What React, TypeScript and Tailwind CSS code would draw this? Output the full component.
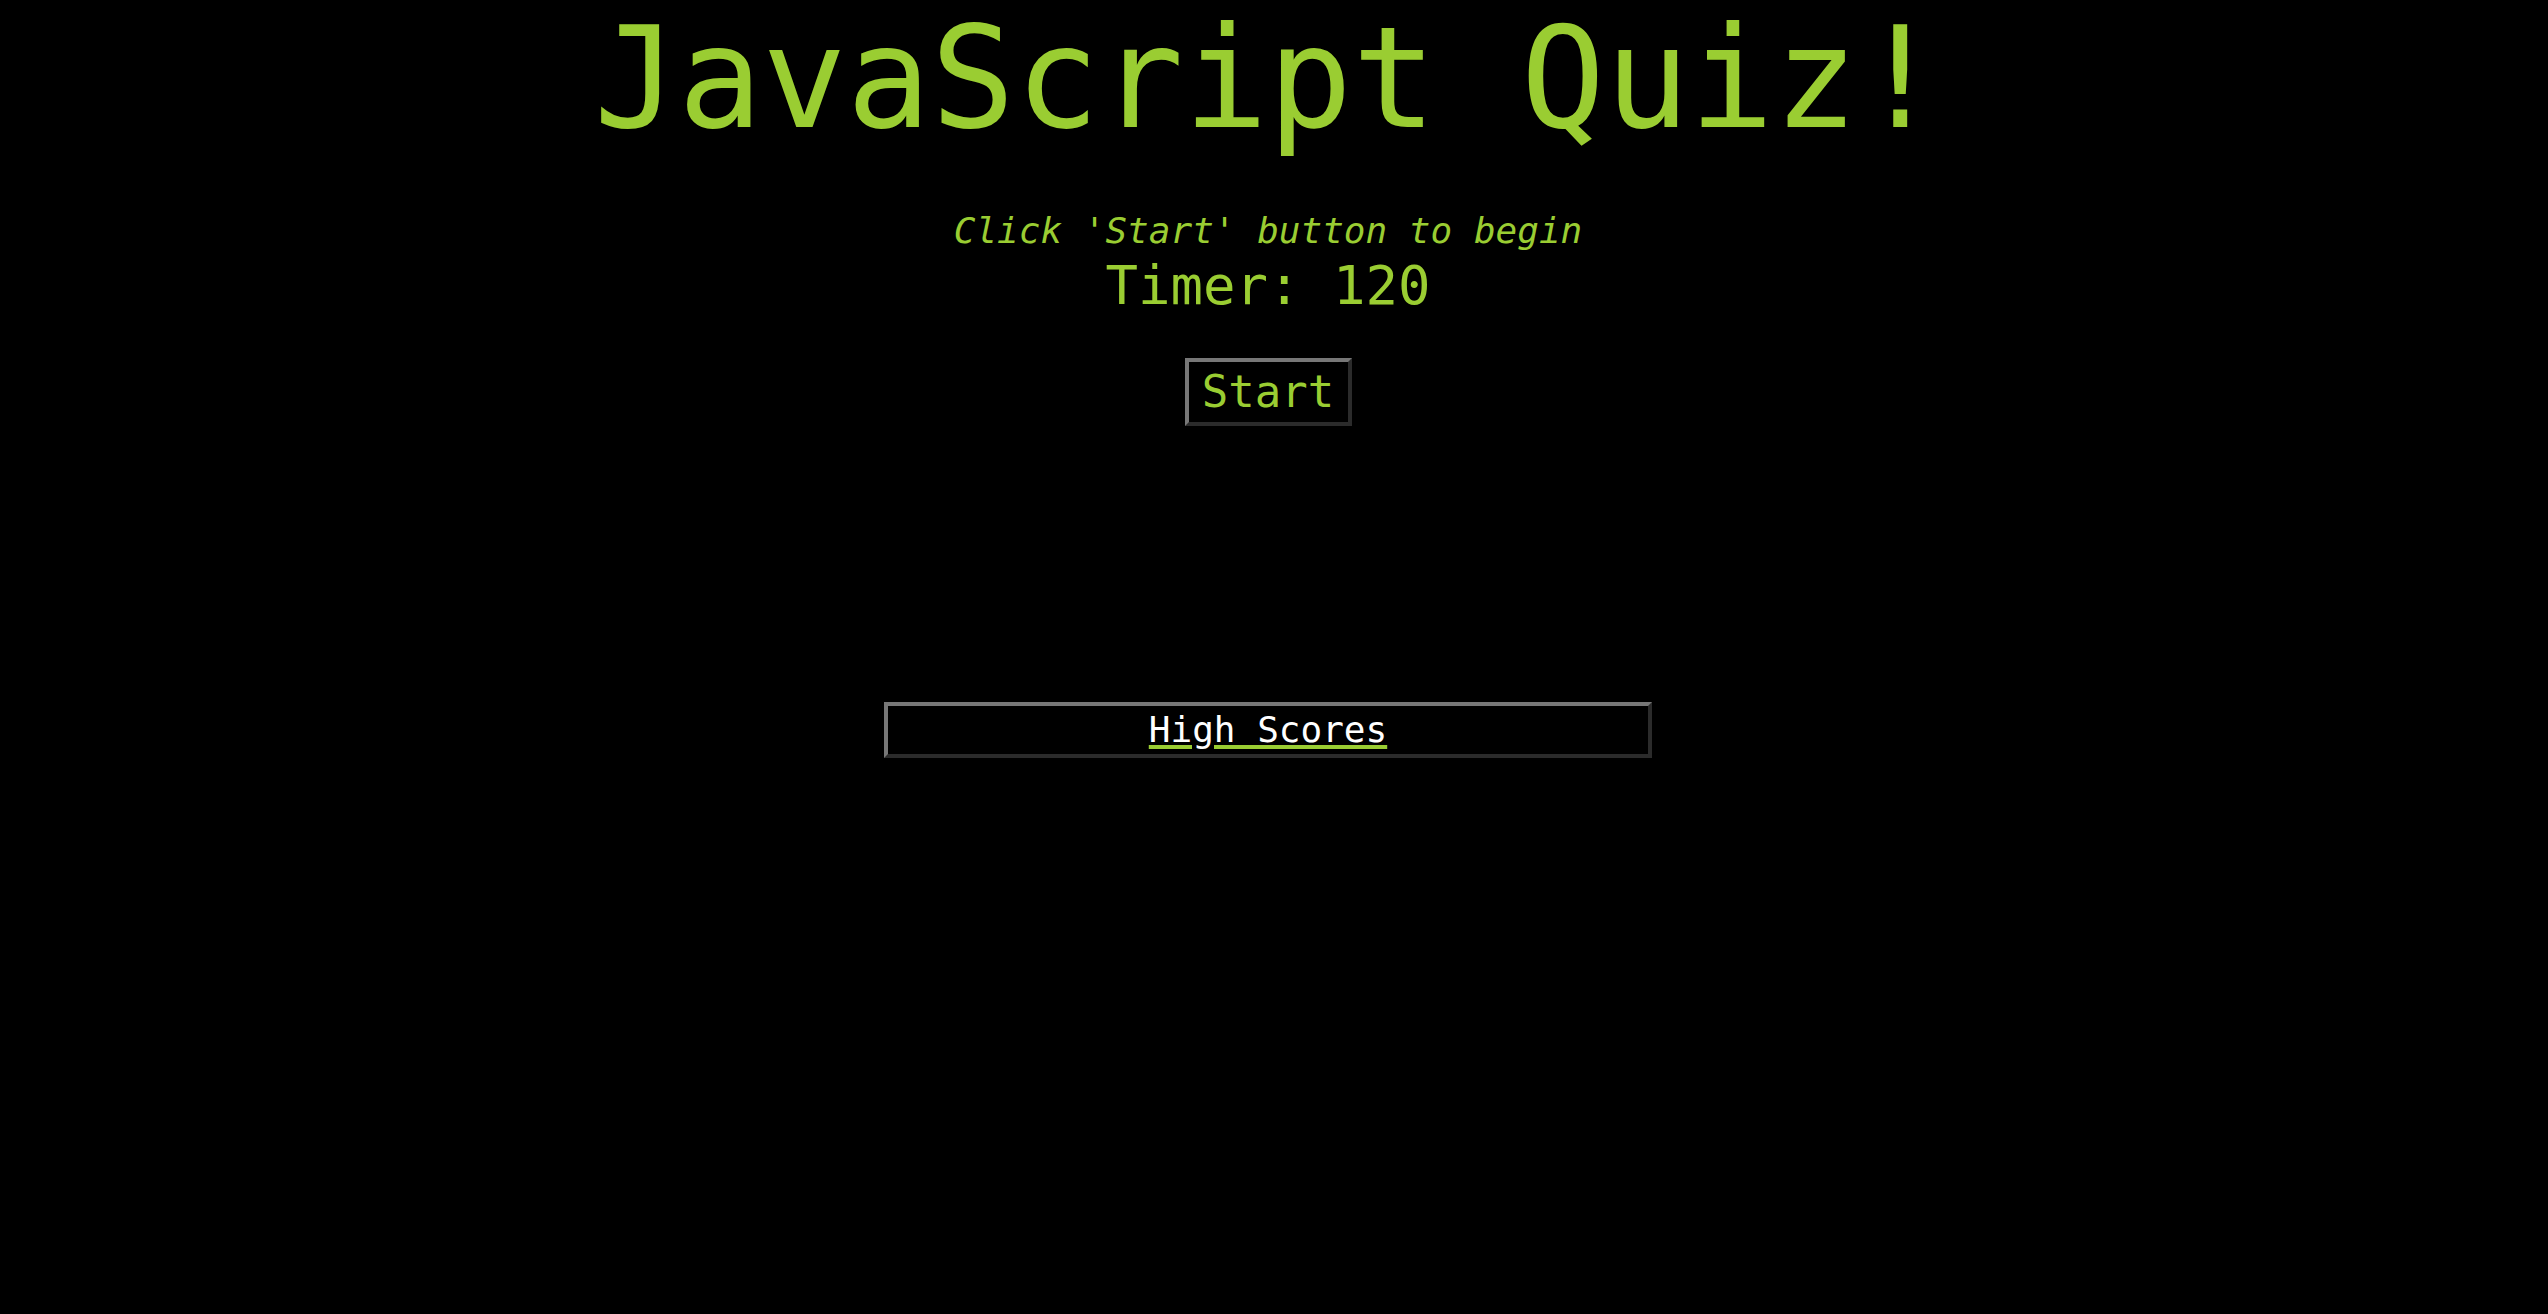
import React from 'react';

const mono = "font-['DejaVu_Sans_Mono','Liberation_Mono',monospace]";

const App: React.FC = () => {
  const timeLeft = 120;

  return (
    <div className={`min-h-screen w-full bg-black text-[#9acd32] ${mono} pr-3`}>
      <div className="flex flex-col items-center">
        {/* Title */}
        <h1 className="mt-[9px] text-[140px] leading-[140px] font-normal whitespace-pre">JavaScript Quiz!</h1>

        {/* Instructions + timer */}
        <p className="mt-[64px] text-[36px] leading-[36px] italic">Click 'Start' button to begin</p>
        <p className="mt-[10px] text-[54px] leading-[54px]">Timer: {timeLeft}</p>

        <button className="mt-[45px] w-[167px] h-[68px] border-4 border-t-[#777777] border-l-[#777777] border-r-[#2b2b2b] border-b-[#2b2b2b] bg-black text-[#9acd32] text-[44px] leading-[44px] flex items-center justify-center">
          Start
        </button>

        {/* High scores link */}
        <div className="mt-[276px] w-[768px] h-[56px] border-4 border-t-[#777777] border-l-[#777777] border-r-[#2b2b2b] border-b-[#2b2b2b] flex items-center justify-center">
          <a href="#" className="text-white text-[36px] leading-[36px] underline decoration-[#9acd32] decoration-[4px] underline-offset-[3px]">
            High Scores
          </a>
        </div>
      </div>
    </div>
  );
};

export default App;
